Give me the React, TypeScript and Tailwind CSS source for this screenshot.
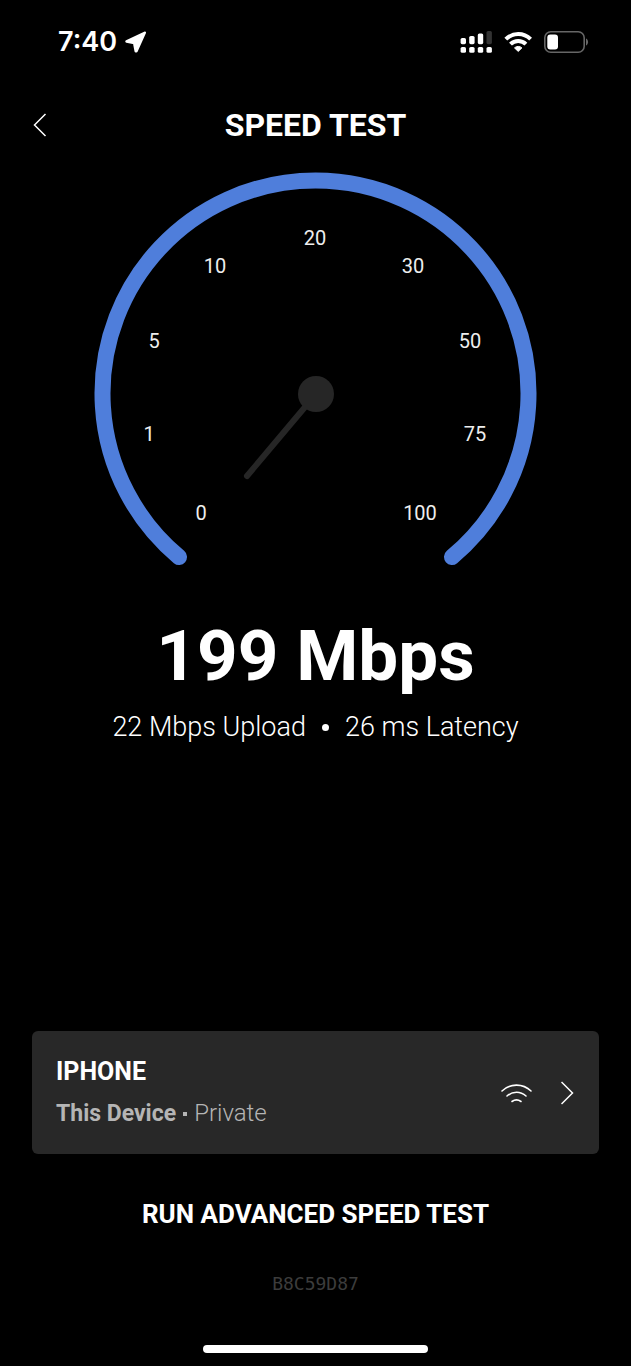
const GAUGE_LABELS = [
  { value: "0", x: 106, y: 340 },
  { value: "1", x: 54, y: 261 },
  { value: "5", x: 59, y: 168 },
  { value: "10", x: 120, y: 93 },
  { value: "20", x: 220, y: 65 },
  { value: "30", x: 318, y: 93 },
  { value: "50", x: 375, y: 168 },
  { value: "75", x: 380, y: 261 },
  { value: "100", x: 325, y: 340 },
];

function StatusBar() {
  return (
    <div className="flex h-[84px] items-center justify-between pl-[58px] pr-[42px]">
      <div className="flex items-center gap-2">
        <span className="font-[Inter,sans-serif] text-[27px] leading-8 font-semibold">7:40</span>
        <svg width="22" height="22" viewBox="1 0 22 22" fill="#fff" stroke="#fff" strokeWidth="2.6" strokeLinejoin="round" aria-hidden="true">
          <path d="M20.7 1.8 2.6 10.4 10.2 12 11.8 20.2 12.4 20.2Z" />
        </svg>
      </div>
      <div className="flex items-center gap-3">
        <svg width="32" height="22" viewBox="0 0 32 22" fill="#fff" aria-hidden="true">
          <rect x="0.6" y="7" width="5.4" height="6.2" rx="1.6" />
          <rect x="9.2" y="5" width="5.4" height="8.2" rx="1.6" />
          <rect x="17.8" y="2.4" width="5.4" height="10.8" rx="1.6" />
          <rect x="26.5" y="0" width="5.4" height="13.2" rx="1.6" fill="#333" />
          <rect x="0.6" y="16" width="5.4" height="5.8" rx="1.6" />
          <rect x="9.2" y="16" width="5.4" height="5.8" rx="1.6" />
          <rect x="17.8" y="16" width="5.4" height="5.8" rx="1.6" />
          <rect x="26.5" y="16" width="5.4" height="5.8" rx="1.6" />
        </svg>
        <svg width="28" height="22" viewBox="0 0 28 22" fill="none" stroke="#fff" strokeWidth="4" aria-hidden="true">
          <path d="M1.8 8.2A17.6 17.6 0 0 1 26.6 8.2" />
          <path d="M6.5 13.2A10.9 10.9 0 0 1 21.9 13.2" />
          <path d="M14.2 20.4 10.5 16.9A5.3 5.3 0 0 1 17.9 16.9Z" fill="#fff" stroke="#fff" strokeWidth="1" strokeLinejoin="round" />
        </svg>
        <svg width="45" height="22" viewBox="0 0 45 22" fill="none" aria-hidden="true">
          <rect x="0.8" y="0.8" width="39.4" height="20.4" rx="6" stroke="#666" strokeWidth="1.6" />
          <rect x="3.3" y="3.6" width="10.7" height="14.8" rx="3" fill="#fff" />
          <path d="M42 7.5C44.8 8.8 44.8 13.2 42 14.5Z" fill="#666" />
        </svg>
      </div>
    </div>
  );
}

function Header() {
  return (
    <header className="grid h-[82px] grid-cols-[40px_1fr_40px] items-center px-5">
      <button type="button" aria-label="Back" className="flex h-10 items-center justify-center">
        <svg width="14" height="24" viewBox="0 0 14 24" fill="none" stroke="#fff" strokeWidth="1.5" aria-hidden="true">
          <path d="M12.5 1 1.5 12 12.5 23" />
        </svg>
      </button>
      <h1 className="text-center text-[32px] leading-10 font-bold">SPEED TEST</h1>
    </header>
  );
}

function Gauge() {
  return (
    <svg className="mx-auto mt-[7px] w-[442px] max-w-full overflow-visible" viewBox="0 0 442 393" role="img" aria-label="Speed gauge">
      <path d="M84 384A213 213 0 1 1 357 384" fill="none" stroke="#4f7edb" strokeWidth="16" strokeLinecap="round" />
      <path d="M221 221 152 303" stroke="#262626" strokeWidth="6" strokeLinecap="round" />
      <circle cx="221" cy="221" r="18" fill="#262626" />
      {GAUGE_LABELS.map((label) => (
        <text key={label.value} x={label.x} y={label.y} dy="7" textAnchor="middle" fill="#eee" className="text-[20px]">
          {label.value}
        </text>
      ))}
    </svg>
  );
}

function DeviceCard() {
  return (
    <button type="button" className="mx-8 flex items-center justify-between rounded-md bg-[#282828] px-6 pt-5 pb-5 text-left">
      <span className="flex flex-col">
        <span className="text-[25px] leading-[42px] font-bold">IPHONE</span>
        <span className="flex items-center gap-[7px] text-[23px] leading-[41px] text-[#b5b5b5]">
          <span className="font-bold">This Device</span>
          <span className="size-1 bg-[#b5b5b5]" />
          <span className="text-[24px] font-light">Private</span>
        </span>
      </span>
      <span className="flex items-center gap-7">
        <svg width="32" height="20" viewBox="1 0 32 20" fill="none" stroke="#fff" strokeWidth="1.6" strokeLinecap="round" aria-hidden="true">
          <path d="M2 8C10 .2 23 .2 31 8" />
          <path d="M7 13C12.5 8 20.5 8 26 13" />
          <path d="M12 18.5C14.7 16.6 18.3 16.6 21 18.5" />
        </svg>
        <svg width="14" height="24" viewBox="1 0 14 24" fill="none" stroke="#fff" strokeWidth="1.5" aria-hidden="true">
          <path d="M1.5 1 12.5 12 1.5 23" />
        </svg>
      </span>
    </button>
  );
}

export default function App() {
  return (
    <div className="flex min-h-screen flex-col bg-black font-[Roboto,sans-serif] text-white">
      <StatusBar />
      <Header />
      <Gauge />
      <p className="mt-11 text-center text-[71px] leading-[92px] font-bold">199 Mbps</p>
      <p className="flex items-center justify-center gap-4 text-[27px] leading-[50px] font-light">
        <span>22 Mbps Upload</span>
        <span className="size-[7px] rounded-full bg-white" />
        <span>26 ms Latency</span>
      </p>
      <div className="mt-auto flex flex-col">
        <DeviceCard />
        <button type="button" className="mx-auto mt-10 text-[26px] leading-10 font-bold">
          RUN ADVANCED SPEED TEST
        </button>
        <p className="mt-[38px] text-center font-['DejaVu_Sans_Mono',monospace] text-[18px] leading-6 text-[#3c3c3c]">B8C59D87</p>
        <div className="mx-auto mt-[49px] mb-[13px] h-2 w-[225px] rounded-full bg-white" />
      </div>
    </div>
  );
}
